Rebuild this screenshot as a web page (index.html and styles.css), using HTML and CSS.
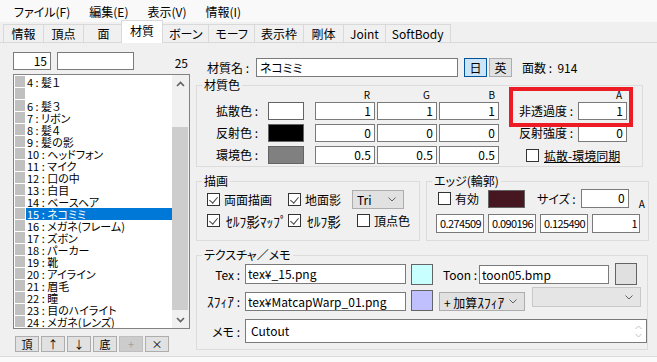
FILE: index.html
```html
<!DOCTYPE html>
<html lang="ja">
<head>
    <meta charset="UTF-8">
    <title>材質</title>
    <link rel="stylesheet" href="styles.css">
</head>
<body>
    <div class="menubar">
        <span class="menu-item">ファイル(F)</span>
        <span class="menu-item">編集(E)</span>
        <span class="menu-item">表示(V)</span>
        <span class="menu-item">情報(I)</span>
    </div>
    <div class="tabs">
        <span class="tab">情報</span>
        <span class="tab">頂点</span>
        <span class="tab">面</span>
        <span class="tab active">材質</span>
        <span class="tab">ボーン</span>
        <span class="tab">モーフ</span>
        <span class="tab">表示枠</span>
        <span class="tab">剛体</span>
        <span class="tab">Joint</span>
        <span class="tab">SoftBody</span>
    </div>

    <div class="page">
        <!-- 材質リスト -->
        <div class="left">
            <div class="find-row">
                <div class="field num idx-field">15</div>
                <div class="field find-field"></div>
                <span class="count">25</span>
            </div>
            <div class="listbox">
                <ul class="items">
                    <li><i></i><span>4 : 髪１</span></li>
                    <li><i></i><span></span></li>
                    <li><i></i><span>6 : 髪３</span></li>
                    <li><i></i><span>7 : リボン</span></li>
                    <li><i></i><span>8 : 髪４</span></li>
                    <li><i></i><span>9 : 髪の影</span></li>
                    <li><i></i><span>10 : ヘッドフォン</span></li>
                    <li><i></i><span>11 : マイク</span></li>
                    <li><i></i><span>12 : 口の中</span></li>
                    <li><i></i><span>13 : 白目</span></li>
                    <li><i></i><span>14 : ベースヘア</span></li>
                    <li class="selected"><i></i><span>15 : ネコミミ</span></li>
                    <li><i></i><span>16 : メガネ(フレーム)</span></li>
                    <li><i></i><span>17 : ズボン</span></li>
                    <li><i></i><span>18 : パーカー</span></li>
                    <li><i></i><span>19 : 靴</span></li>
                    <li><i></i><span>20 : アイライン</span></li>
                    <li><i></i><span>21 : 眉毛</span></li>
                    <li><i></i><span>22 : 瞳</span></li>
                    <li><i></i><span>23 : 目のハイライト</span></li>
                    <li><i></i><span>24 : メガネ(レンズ)</span></li>
                </ul>
                <div class="vscroll">
                    <div class="sb-btn"><svg width="9" height="6" viewBox="0 0 9 6"><path d="M1 5l3.5-3.5L8 5"/></svg></div>
                    <div class="sb-track"><div class="sb-thumb"></div></div>
                    <div class="sb-btn"><svg width="9" height="6" viewBox="0 0 9 6"><path d="M1 1l3.5 3.5L8 1"/></svg></div>
                </div>
            </div>
            <div class="list-buttons">
                <span class="sbtn">頂</span>
                <span class="sbtn">↑</span>
                <span class="sbtn">↓</span>
                <span class="sbtn">底</span>
                <span class="sbtn disabled">+</span>
                <span class="sbtn">×</span>
            </div>
        </div>

        <!-- 材質の詳細 -->
        <div class="right">
            <div class="name-row">
                <span class="name-label">材質名 :</span>
                <div class="field name-field">ネコミミ</div>
                <span class="lang-btn on">日</span>
                <span class="lang-btn">英</span>
                <span class="face-count">面数 :&nbsp; 914</span>
            </div>

            <fieldset class="group color-group">
                <legend>材質色</legend>
                <div class="color-body">
                    <div class="color-grid">
                        <span></span><span></span>
                        <span class="ch">R</span><span class="ch ch-g">G</span><span class="ch ch-b">B</span>

                        <span class="row-label">拡散色 :</span>
                        <span class="swatch" style="background: #ffffff;"></span>
                        <div class="field num">1</div>
                        <div class="field num">1</div>
                        <div class="field num">1</div>

                        <span class="row-label">反射色 :</span>
                        <span class="swatch" style="background: #000000;"></span>
                        <div class="field num">0</div>
                        <div class="field num">0</div>
                        <div class="field num">0</div>

                        <span class="row-label">環境色 :</span>
                        <span class="swatch" style="background: #808080;"></span>
                        <div class="field num">0.5</div>
                        <div class="field num">0.5</div>
                        <div class="field num">0.5</div>
                    </div>
                    <div class="alpha-col">
                        <div class="alpha-box">
                            <span class="ch ch-a">A</span>
                            <div class="arow"><span class="arow-label">非透過度 :</span><div class="field num">1</div></div>
                        </div>
                        <div class="arow"><span class="arow-label">反射強度 :</span><div class="field num">0</div></div>
                        <label class="check sync"><span class="cb"></span><u>拡散-環境同期</u></label>
                    </div>
                </div>
            </fieldset>

            <div class="mid-row">
                <fieldset class="group draw-group">
                    <legend>描画</legend>
                    <div class="draw-grid">
                        <label class="check"><span class="cb on"></span>両面描画</label>
                        <label class="check"><span class="cb on"></span>地面影</label>
                        <div class="select tri-select">Tri<svg class="chev" width="8" height="5" viewBox="0 0 8 5"><path d="M0.5 0.5l3.5 3.5 3.5-3.5"/></svg></div>
                        <label class="check"><span class="cb on"></span><span class="hw">ｾﾙﾌ影ﾏｯﾌﾟ</span></label>
                        <label class="check"><span class="cb on"></span><span class="hw">ｾﾙﾌ影</span></label>
                        <label class="check vcolor"><span class="cb"></span>頂点色</label>
                    </div>
                </fieldset>
                <fieldset class="group edge-group">
                    <legend>エッジ(輪郭)</legend>
                    <div class="edge-body">
                        <div class="edge-top">
                            <label class="check"><span class="cb"></span>有効</label>
                            <span class="swatch edge-swatch" style="background: rgb(70, 23, 32);"></span>
                            <span class="size-label">サイズ :</span>
                            <div class="field num size-field">0</div>
                            <span class="ch edge-a">A</span>
                        </div>
                        <div class="edge-vals">
                            <div class="field num">0.274509</div>
                            <div class="field num">0.090196</div>
                            <div class="field num">0.125490</div>
                            <div class="field num">1</div>
                        </div>
                    </div>
                </fieldset>
            </div>

            <fieldset class="group tex-group">
                <legend>テクスチャ／メモ</legend>
                <div class="tex-body">
                    <div class="tex-row">
                        <span class="tex-label">Tex :</span>
                        <div class="field path-field">tex¥_15.png</div>
                        <span class="swatch tex-swatch" style="background: #c8ffff;"></span>
                        <span class="toon-label">Toon :</span>
                        <div class="field toon-field">toon05.bmp</div>
                        <span class="swatch toon-swatch" style="background: #e0e0e0;"></span>
                    </div>
                    <div class="tex-row sph-row">
                        <span class="tex-label"><span class="hw">ｽﾌｨｱ</span> :</span>
                        <div class="field path-field">tex¥MatcapWarp_01.png</div>
                        <span class="swatch tex-swatch" style="background: #c0c0ff;"></span>
                        <div class="select sph-mode"><span>+ 加算<span class="hw">ｽﾌｨｱ</span></span><svg class="chev" width="8" height="5" viewBox="0 0 8 5"><path d="M0.5 0.5l3.5 3.5 3.5-3.5"/></svg></div>
                        <div class="select sph-sub"><svg class="chev" width="8" height="5" viewBox="0 0 8 5"><path d="M0.5 0.5l3.5 3.5 3.5-3.5"/></svg></div>
                    </div>
                    <div class="tex-row memo-row">
                        <span class="tex-label">メモ :</span>
                        <div class="field memo-field">
                            <span class="memo-text">Cutout</span>
                            <span class="memo-scroll">
                                <svg width="7" height="5" viewBox="0 0 7 5"><path d="M0.5 4l3-3 3 3"/></svg>
                                <svg width="7" height="5" viewBox="0 0 7 5"><path d="M0.5 1l3 3 3-3"/></svg>
                            </span>
                        </div>
                    </div>
                </div>
            </fieldset>
        </div>
    </div>
    <div class="statusbar"></div>
</body>
</html>
```

FILE: styles.css
```css
* {
    box-sizing: border-box;
}

body {
    margin: 0;
    width: 657px;
    height: 362px;
    overflow: hidden;
    background: #f0f0f0;
    color: #000;
    font-family: "Noto Sans CJK JP", "Noto Sans", sans-serif;
    font-size: 12px;
    font-feature-settings: "palt";
}

/* 半角カナは少し大きめに */
.hw {
    font-size: 13.5px;
}

/* メニュー */
.menubar {
    height: 22px;
    display: flex;
    align-items: center;
    gap: 19px;
    padding-left: 14px;
    background: #f9f9f9;
}

/* タブ */
.tabs {
    height: 21px;
    display: flex;
    align-items: flex-end;
    padding-left: 3px;
    border-bottom: 1px solid #d9d9d9;
}

.tab {
    height: 18px;
    min-width: 41px;
    padding: 0 6px;
    line-height: 17px;
    text-align: center;
    border: 1px solid #d9d9d9;
    border-bottom: none;
    margin-right: -1px;
    background: #f0f0f0;
}

.tab.active {
    height: 23px;
    margin: 0 -1px -1px -2px;
    padding: 0 8px;
    line-height: 19px;
    background: #fff;
    position: relative;
    z-index: 1;
}

.page {
    height: 313px;
    display: flex;
}

.statusbar {
    height: 6px;
    border-top: 1px solid #dadada;
    background: #fafafa;
}

/* 入力欄 */
.field {
    height: 18px;
    border: 1px solid #7a7a7a;
    background: #fff;
    line-height: 16px;
    padding: 0 3px;
    white-space: nowrap;
    overflow: hidden;
}

.field.num {
    text-align: right;
}

.swatch {
    display: block;
    width: 36px;
    height: 18px;
    border: 1px solid #646464;
}

.check {
    display: inline-flex;
    align-items: center;
    gap: 4px;
    white-space: nowrap;
}

.cb {
    flex: none;
    width: 13px;
    height: 13px;
    border: 1px solid #333;
    background: #fff;
    position: relative;
}

.cb.on::after {
    content: "";
    position: absolute;
    left: 3px;
    top: 1px;
    width: 4px;
    height: 7px;
    border: solid #444;
    border-width: 0 1px 1px 0;
    transform: rotate(40deg);
}

.select {
    height: 19px;
    display: flex;
    align-items: center;
    justify-content: space-between;
    padding: 0 7px 0 4px;
    border: 1px solid #adadad;
    background: #e1e1e1;
    white-space: nowrap;
}

.chev path,
.sb-btn path,
.memo-scroll path {
    fill: none;
    stroke: #606060;
    stroke-width: 1;
}

/* 左側 */
.left {
    flex: none;
    width: 190px;
    padding: 9px 0 0 13px;
}

.find-row {
    height: 18px;
    display: flex;
}

.idx-field {
    width: 38px;
}

.find-field {
    width: 77px;
    margin-left: 6px;
}

.count {
    margin: 4px 2px 0 auto;
    line-height: 14px;
}

.listbox {
    margin-top: 4px;
    width: 177px;
    height: 255px;
    border: 1px solid #828282;
    background: #fff;
    display: flex;
}

.items {
    flex: 1;
    margin: 0;
    padding: 1px 0 0;
    list-style: none;
    overflow: hidden;
}

.items li {
    height: 12px;
    display: flex;
    font-size: 11px;
    line-height: 12px;
    white-space: nowrap;
}

.items i {
    flex: none;
    width: 10px;
    height: 11px;
    margin: 0 1px;
    background: #c0c0c0;
}

.items span {
    flex: 1;
    padding-left: 1px;
}

.items li.selected span {
    background: #0078d7;
    color: #fff;
}

.vscroll {
    width: 17px;
    display: flex;
    flex-direction: column;
    background: #f0f0f0;
}

.sb-btn {
    height: 17px;
    display: flex;
    align-items: center;
    justify-content: center;
}

.sb-btn path {
    stroke-width: 1.6;
}

.sb-track {
    flex: 1;
}

.sb-thumb {
    margin: 35px 1px 0 0;
    height: 183px;
    background: #cdcdcd;
}

.list-buttons {
    margin-top: 7px;
    padding-left: 2px;
    display: flex;
    gap: 2px;
}

.sbtn {
    width: 24px;
    height: 16px;
    border: 1px solid #adadad;
    background: #e1e1e1;
    text-align: center;
    font-size: 11px;
    line-height: 14px;
}

.sbtn.disabled {
    border-color: #bfbfbf;
    background: #cccccc;
    color: #a0a0a0;
}

/* 右側 */
.right {
    flex: 1;
    margin-left: 6px;
    padding-top: 15px;
}

.name-row {
    height: 19px;
    display: flex;
    align-items: center;
}

.name-label {
    width: 60px;
    padding-left: 11px;
}

.name-field {
    width: 202px;
    height: 19px;
    line-height: 17px;
}

.lang-btn {
    width: 23px;
    height: 19px;
    margin-left: 2px;
    border: 1px solid #adadad;
    background: #e1e1e1;
    text-align: center;
    line-height: 17px;
}

.lang-btn.on {
    margin-left: 6px;
    border-color: #005499;
    background: #cce4f7;
}

.face-count {
    margin-left: 10px;
}

/* グループ */
.group {
    margin: 0;
    padding: 0;
    min-width: 0;
    border: 1px solid #dcdcdc;
}

.group legend {
    margin-left: 5px;
    padding: 0 2px;
    line-height: 12px;
}

.color-group {
    width: 447px;
    margin-top: 2px;
    padding-bottom: 2px;
}

.color-body {
    display: flex;
}

.color-grid {
    display: grid;
    grid-template-columns: 71px 47px 62px 62px 59px;
    grid-template-rows: 7px 18px 18px 18px;
    row-gap: 4px;
}

.color-grid .field {
    width: 60px;
}

.ch {
    font-size: 10px;
    line-height: 7px;
    text-align: right;
    padding-right: 7px;
}

.ch-g {
    padding-right: 9px;
}

.ch-b {
    padding-right: 3px;
}

.row-label {
    text-align: right;
    padding-right: 10px;
    line-height: 18px;
}

.alpha-col {
    width: 129px;
    display: flex;
    flex-direction: column;
    gap: 4px;
}

.alpha-box {
    display: flex;
    flex-direction: column;
    gap: 4px;
    position: relative;
}

.alpha-box::after {
    content: "";
    position: absolute;
    left: 11px;
    right: -6px;
    top: -4px;
    bottom: -7px;
    border: 4px solid #ed1c24;
    pointer-events: none;
}

.ch-a {
    padding-right: 5px;
}

.arow {
    height: 18px;
    display: flex;
}

.arow-label {
    width: 80px;
    text-align: right;
    padding-right: 5px;
    line-height: 18px;
}

.arow .field {
    width: 49px;
}

.sync {
    height: 18px;
    padding-left: 28px;
    gap: 5px;
}

.mid-row {
    margin-top: 8px;
    display: flex;
    gap: 6px;
}

.draw-group {
    width: 224px;
}

.draw-grid {
    padding: 3px 0 10px 10px;
    display: grid;
    grid-template-columns: 81px 64px auto;
    grid-template-rows: 19px 19px;
    row-gap: 2px;
    align-items: center;
}

.draw-grid .hw {
    margin-left: 2px;
}

.tri-select {
    width: 52px;
}

.vcolor {
    margin-left: 5px;
}

.edge-group {
    width: 223px;
}

.edge-body {
    padding: 2px 0 7px 9px;
    display: flex;
    flex-direction: column;
    gap: 6px;
}

.edge-top {
    height: 19px;
    display: flex;
    align-items: center;
    padding-left: 2px;
}

.edge-swatch {
    width: 37px;
    margin-left: 9px;
}

.size-label {
    margin-left: 12px;
}

.size-field {
    width: 48px;
    height: 19px;
    margin-left: 5px;
}

.edge-a {
    align-self: flex-end;
    margin-left: 10px;
    padding: 0;
    line-height: 8px;
}

.edge-vals {
    display: flex;
    gap: 4px;
}

.edge-vals .field {
    width: 48px;
    height: 19px;
    line-height: 17px;
    padding: 0 2px 0 0;
    font-size: 11px;
    letter-spacing: -0.6px;
}

.tex-group {
    width: 452px;
    margin-top: 8px;
}

.tex-body {
    padding: 2px 0 6px;
}

.tex-row {
    height: 22px;
    display: flex;
    align-items: center;
}

.tex-label {
    flex: none;
    width: 48px;
    padding-right: 5px;
    text-align: right;
    white-space: nowrap;
}

.path-field {
    width: 161px;
    height: 20px;
    line-height: 18px;
    padding-left: 2px;
}

.tex-swatch {
    width: 22px;
    height: 21px;
    margin-left: 5px;
}

.toon-label {
    width: 36px;
    margin-left: 10px;
}

.toon-field {
    width: 130px;
    height: 19px;
    line-height: 17px;
    padding-left: 2px;
}

.toon-swatch {
    width: 22px;
    height: 22px;
    margin-left: 6px;
}

.sph-row {
    height: 24px;
    margin-top: 2px;
    align-items: flex-end;
}

.sph-row .tex-label {
    line-height: 19px;
}

.sph-row .path-field {
    height: 19px;
    line-height: 17px;
}

.sph-mode {
    width: 86px;
    margin-left: 6px;
}

.sph-sub {
    width: 109px;
    height: 20px;
    margin-left: 7px;
    align-self: flex-start;
    justify-content: flex-end;
    border-color: #c8c8c8;
    background: #e5e5e5;
}

.memo-row {
    height: 24px;
    margin-top: 8px;
}

.memo-field {
    width: 406px;
    height: 24px;
    display: flex;
    align-items: center;
    padding: 0 2px 0 5px;
}

.memo-text {
    flex: 1;
}

.memo-scroll {
    width: 12px;
    display: flex;
    flex-direction: column;
    align-items: center;
    gap: 3px;
}

.memo-scroll path {
    stroke: #c0c0c0;
}
```
